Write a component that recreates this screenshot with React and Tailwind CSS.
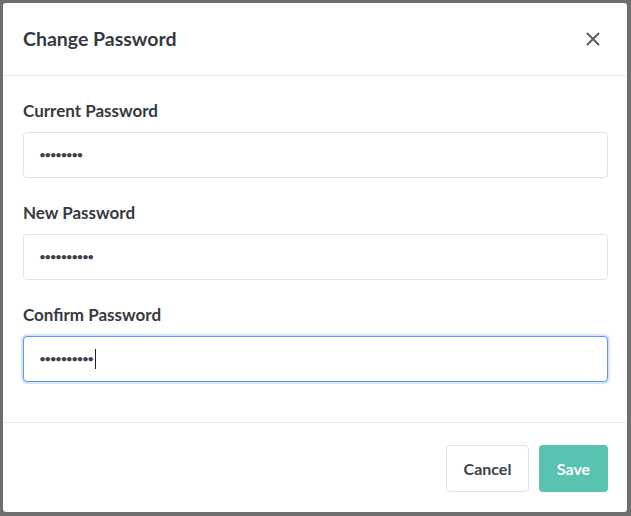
import React from "react";

function Field({ label, value, focused, mb }) {
  return (
    <div className={mb}>
      <label className="block text-[17px] font-bold leading-[18px] text-[#363a42]">{label}</label>
      <div
        className={
          "mt-[12px] flex h-[46px] items-center rounded-[4px] border bg-white pl-[15px] " +
          (focused
            ? "border-[#5a98e8] shadow-[0_0_0_2px_rgba(90,152,232,0.25)]"
            : "border-[#e1e2ec]")
        }
      >
        <span className="text-[12px] tracking-[-1.6px] text-[#3d4148]">{value}</span>
        {focused && <span className="ml-[2px] h-[20px] w-[1px] bg-[#222]" />}
      </div>
    </div>
  );
}

export default function App() {
  return (
    <div className="h-[516px] w-[631px] bg-[#6e6e6e] p-[3px] pr-[4px] pb-[4px]" style={{ fontFamily: "Lato, 'Noto Sans', sans-serif" }}>
      <div className="flex h-full w-full flex-col rounded-[3px] bg-white">
        <div className="flex h-[73px] items-center justify-between border-b border-[#e8e9ee] pl-[20px] pr-[27px]">
          <h1 className="text-[19.5px] font-bold text-[#363a42]">Change Password</h1>
          <svg width="14" height="14" viewBox="0 0 14 14" className="text-[#5a5d63]">
            <path d="M1.5 1.5 L12.5 12.5 M12.5 1.5 L1.5 12.5" stroke="currentColor" strokeWidth="2" strokeLinecap="round" />
          </svg>
        </div>
        <div className="flex-1 border-b border-[#e8e9ee] pl-[20px] pr-[19px] pt-[26px]">
          <Field label="Current Password" value="••••••••" mb="mb-[26px]" />
          <Field label="New Password" value="••••••••••" mb="mb-[26px]" />
          <Field label="Confirm Password" value="••••••••••" focused />
        </div>
        <div className="flex h-[89px] items-center justify-end gap-[10px] pr-[19px] pt-[2px]">
          <button className="h-[47px] w-[83px] rounded-[4px] border border-[#dfe0e8] bg-white text-[16px] font-bold text-[#3d4148]">
            Cancel
          </button>
          <button className="h-[47px] w-[69px] rounded-[4px] bg-[#57c3b0] text-[16px] font-bold text-white">
            Save
          </button>
        </div>
      </div>
    </div>
  );
}
